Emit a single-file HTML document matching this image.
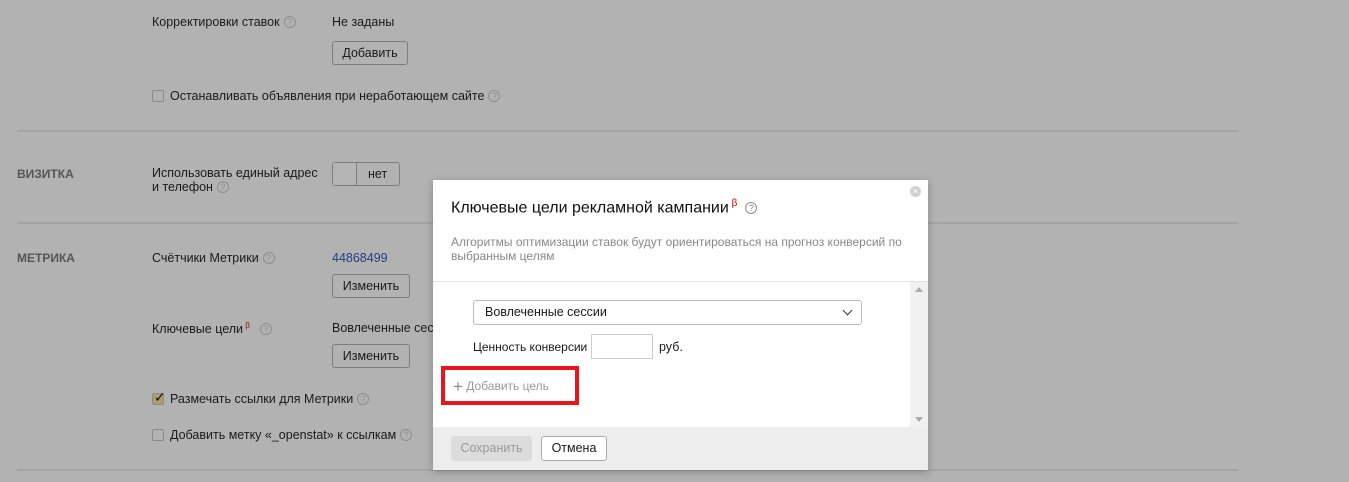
<!DOCTYPE html>
<html><head><meta charset="utf-8"><style>
*{margin:0;padding:0;box-sizing:border-box}
body{width:1349px;height:482px;overflow:hidden;background:#b2b2b2;font-family:"Liberation Sans",Arial,sans-serif;font-size:12.5px;color:#1a1a1a;position:relative}
.a{position:absolute;white-space:nowrap}
.q{display:inline-block;width:12px;height:12px;border:1px solid #8e8e8e;border-radius:50%;font-size:9px;line-height:10px;text-align:center;color:#8e8e8e;vertical-align:1px;margin-left:4px}
.btn{position:absolute;border:1px solid #7d7d7d;border-radius:3px;background:#b2b2b2;text-align:center;line-height:22px;height:24px}
.hr{position:absolute;left:17px;width:1221px;height:2px;background:#a3a3a3}
.cb{display:inline-block;width:12px;height:12px;border:1px solid #8a8a8a;border-radius:2px;vertical-align:-2px;margin-right:6px}
.h{font-weight:bold;color:#555;font-size:12px}
</style></head><body>
<div class="a" style="left:152px;top:15px">Корректировки ставок<span class="q">?</span></div>
<div class="a" style="left:332px;top:15px">Не заданы</div>
<div class="btn" style="left:332px;top:41px;width:76px">Добавить</div>
<div class="a" style="left:152px;top:89px"><span class="cb"></span>Останавливать объявления при неработающем сайте<span class="q">?</span></div>
<div class="hr" style="top:130px"></div>
<div class="a h" style="left:17px;top:167px">ВИЗИТКА</div>
<div class="a" style="left:152px;top:166px;line-height:14px">Использовать единый адрес<br>и телефон<span class="q">?</span></div>
<div class="btn" style="left:332px;top:162px;width:68px;text-align:left"><span style="display:inline-block;width:24px;height:22px;border-right:1px solid #7d7d7d;background:#b5b5b5;vertical-align:top"></span><span style="margin-left:11px">нет</span></div>
<div class="hr" style="top:222px"></div>
<div class="a h" style="left:17px;top:251px">МЕТРИКА</div>
<div class="a" style="left:152px;top:251px">Счётчики Метрики<span class="q">?</span></div>
<div class="a" style="left:332px;top:251px;color:#223d80">44868499</div>
<div class="btn" style="left:332px;top:274px;width:78px">Изменить</div>
<div class="a" style="left:152px;top:321px">Ключевые цели<sup style="color:#a01010;font-size:8px"> β</sup><span class="q" style="margin-left:10px">?</span></div>
<div class="a" style="left:332px;top:321px">Вовлеченные сессии</div>
<div class="btn" style="left:332px;top:344px;width:78px">Изменить</div>
<div class="a" style="left:152px;top:392px"><span class="cb" style="background:#a99e6e;position:relative"><span style="position:absolute;left:1px;top:-5px;font-size:14px;color:#111">✓</span></span>Размечать ссылки для Метрики<span class="q">?</span></div>
<div class="a" style="left:152px;top:428px"><span class="cb"></span>Добавить метку «_openstat» к ссылкам<span class="q">?</span></div>
<div class="hr" style="top:469px"></div>

<div class="a" style="left:433px;top:180px;width:495px;height:290px;background:#fff;box-shadow:0 2px 8px rgba(0,0,0,.25)">
 <div class="a" style="right:7px;top:6px;width:11px;height:11px;border-radius:50%;background:#d0d0d0;color:#fff;font-size:9px;line-height:11px;text-align:center">×</div>
 <div class="a" style="left:18px;top:18px;font-size:16px;color:#111">Ключевые цели рекламной кампании<sup style="color:#d00;font-size:10px"> β</sup><span class="q" style="margin-left:8px">?</span></div>
 <div class="a" style="left:18px;top:55px;font-size:12px;color:#888;line-height:14px">Алгоритмы оптимизации ставок будут ориентироваться на прогноз конверсий по<br>выбранным целям</div>
 <div class="a" style="left:0;top:101px;width:495px;height:1px;background:#e3e3e3"></div>
 <div class="a" style="left:477px;top:102px;width:18px;height:145px;background:#f1f1f1"><div style="position:absolute;left:5px;top:5px;border:4px solid transparent;border-bottom:5px solid #aaa;border-top:0"></div><div style="position:absolute;left:5px;bottom:5px;border:4px solid transparent;border-top:5px solid #aaa;border-bottom:0"></div></div>
 <div class="a" style="left:40px;top:120px;width:389px;height:25px;border:1px solid #bbb;border-radius:3px;padding-left:11px;line-height:23px">Вовлеченные сессии<span style="position:absolute;right:10px;top:6px;width:7px;height:7px;border-right:1.5px solid #333;border-bottom:1.5px solid #333;transform:rotate(45deg)"></span></div>
 <div class="a" style="left:40px;top:160px;font-size:12px">Ценность конверсии</div>
 <div class="a" style="left:158px;top:154px;width:62px;height:25px;border:1px solid #ccc"></div>
 <div class="a" style="left:226px;top:160px">руб.</div>
 <div class="a" style="left:8px;top:186px;width:138px;height:39px;border:4px solid #e8161c"></div>
 <div class="a" style="left:20px;top:197px;color:#999;font-size:12px"><span style="font-size:17px;color:#888;vertical-align:-2px">+</span> Добавить цель</div>
 <div class="a" style="left:0;top:247px;width:495px;height:43px;background:#ededed">
  <div class="a" style="left:18px;top:9px;width:81px;height:25px;background:#dcdcdc;border-radius:3px;color:#999;text-align:center;line-height:25px">Сохранить</div>
  <div class="a" style="left:108px;top:9px;width:66px;height:25px;background:#fff;border:1px solid #aaa;border-radius:3px;text-align:center;line-height:23px">Отмена</div>
 </div>
</div>
</body></html>
